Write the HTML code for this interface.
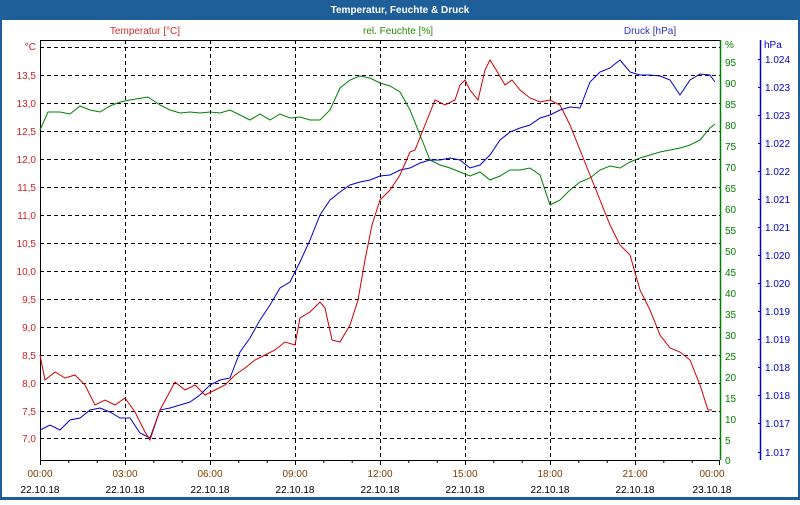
<!DOCTYPE html>
<html><head><meta charset="utf-8"><style>
body{margin:0;width:800px;height:500px;overflow:hidden;background:#fff;font-family:"Liberation Sans",sans-serif}
</style></head><body>
<svg width="800" height="500" xmlns="http://www.w3.org/2000/svg" font-family="Liberation Sans, sans-serif" font-size="10">
<rect x="0" y="0" width="800" height="500" fill="#1e5f99"/>
<rect x="2" y="20" width="796" height="477" fill="#fff"/>
<text x="400" y="13" fill="#fff" font-weight="bold" text-anchor="middle" font-size="10">Temperatur, Feuchte &amp; Druck</text>
<text x="145" y="34" fill="#c83030" text-anchor="middle">Temperatur [°C]</text>
<text x="398" y="34" fill="#2a8a00" text-anchor="middle">rel. Feuchte [%]</text>
<text x="650" y="34" fill="#3030c0" text-anchor="middle">Druck [hPa]</text>
<g stroke="#000" stroke-dasharray="4,3" stroke-width="1">
<path d="M40 47.5H720M40 75.5H720M40 103.5H720M40 131.5H720M40 159.5H720M40 187.5H720M40 215.5H720M40 243.5H720M40 271.5H720M40 299.5H720M40 327.5H720M40 355.5H720M40 383.5H720M40 411.5H720M40 438.5H720"/>
<path d="M125.5 40V460M210.5 40V460M295.5 40V460M380.5 40V460M465.5 40V460M550.5 40V460M635.5 40V460"/>
</g>
<path d="M40.5 40V460.5H720" stroke="#000" fill="none"/>
<path d="M40 40.5H720" stroke="#000"/>
<g stroke="#000"><path d="M40.5 460v5M68.8 460v3M97.2 460v3M125.5 460v5M153.8 460v3M182.2 460v3M210.5 460v5M238.8 460v3M267.2 460v3M295.5 460v5M323.8 460v3M352.2 460v3M380.5 460v5M408.8 460v3M437.2 460v3M465.5 460v5M493.8 460v3M522.2 460v3M550.5 460v5M578.8 460v3M607.2 460v3M635.5 460v5M663.8 460v3M692.2 460v3M719.5 460v5"/></g>
<path d="M720.5 40V460" stroke="#008000" stroke-width="1.5"/>
<path d="M760.5 40V460" stroke="#0000d0" stroke-width="1.5"/>
<g fill="#d02020" text-anchor="end">
<text x="36" y="50">°C</text><text x="36" y="79">13,5</text><text x="36" y="107">13,0</text><text x="36" y="135">12,5</text><text x="36" y="163">12,0</text><text x="36" y="191">11,5</text><text x="36" y="219">11,0</text><text x="36" y="247">10,5</text><text x="36" y="275">10,0</text><text x="36" y="303">9,5</text><text x="36" y="331">9,0</text><text x="36" y="359">8,5</text><text x="36" y="387">8,0</text><text x="36" y="415">7,5</text><text x="36" y="442">7,0</text>
</g>
<g fill="#008000">
<text x="725" y="48">%</text>
<text x="725" y="66">95</text><text x="725" y="87">90</text><text x="725" y="108">85</text><text x="725" y="129">80</text><text x="725" y="150">75</text><text x="725" y="171">70</text><text x="725" y="192">65</text><text x="725" y="213">60</text><text x="725" y="234">55</text><text x="725" y="255">50</text><text x="725" y="276">45</text><text x="725" y="297">40</text><text x="725" y="318">35</text><text x="725" y="339">30</text><text x="725" y="360">25</text><text x="725" y="381">20</text><text x="725" y="402">15</text><text x="725" y="423">10</text><text x="725" y="444">5</text><text x="725" y="464">0</text>
</g>
<g fill="#0000d0">
<text x="764" y="48">hPa</text>
<text x="765" y="63">1.024</text><text x="765" y="91">1.023</text><text x="765" y="119">1.023</text><text x="765" y="147">1.022</text><text x="765" y="175">1.022</text><text x="765" y="203">1.021</text><text x="765" y="231">1.021</text><text x="765" y="259">1.020</text><text x="765" y="287">1.020</text><text x="765" y="315">1.019</text><text x="765" y="343">1.019</text><text x="765" y="371">1.018</text><text x="765" y="399">1.018</text><text x="765" y="427">1.017</text><text x="765" y="456">1.017</text>
</g>
<g stroke="#0000d0"><path d="M758 59.5h3M758 87.5h3M758 115.5h3M758 143.5h3M758 171.5h3M758 199.5h3M758 227.5h3M758 255.5h3M758 283.5h3M758 311.5h3M758 339.5h3M758 367.5h3M758 395.5h3M758 423.5h3M758 452.5h3"/></g>
<g text-anchor="middle">
<g fill="#804000"><text x="40" y="477">00:00</text><text x="125" y="477">03:00</text><text x="210" y="477">06:00</text><text x="295" y="477">09:00</text><text x="380" y="477">12:00</text><text x="465" y="477">15:00</text><text x="550" y="477">18:00</text><text x="635" y="477">21:00</text><text x="712" y="477">00:00</text></g>
<g fill="#000"><text x="40" y="493">22.10.18</text><text x="125" y="493">22.10.18</text><text x="210" y="493">22.10.18</text><text x="295" y="493">22.10.18</text><text x="380" y="493">22.10.18</text><text x="465" y="493">22.10.18</text><text x="550" y="493">22.10.18</text><text x="635" y="493">22.10.18</text><text x="712" y="493">23.10.18</text></g>
</g>
<g fill="none" stroke-width="1">
<polyline stroke="#008000" points="40,130 48,112 60,112 70,114 80,106 90,110 100,112 110,106 120,102 130,100 148,97 160,105 170,110 180,113 190,112 200,113 210,112 220,113 230,110 240,115 250,120 260,114 270,120 280,114 290,118 300,117 310,120 320,120 330,110 340,88 350,80 360,76 370,78 380,83 390,86 400,92 410,110 420,135 430,160 440,165 450,168 460,172 470,176 480,172 490,180 500,176 510,170 520,170 530,168 540,175 550,205 560,200 570,190 580,182 590,178 600,170 610,166 620,168 630,162 640,158 650,155 660,152 670,150 680,148 690,145 700,140 710,128 715,124"/>
<polyline stroke="#0000d0" points="40,430 50,425 60,430 70,420 80,418 90,410 100,408 110,412 120,418 130,418 140,433 150,438 160,410 170,408 180,405 190,402 200,395 210,385 220,380 230,378 240,352 250,338 260,320 270,305 280,288 290,282 300,262 310,240 320,215 330,200 340,192 350,185 360,182 370,180 380,176 390,175 400,170 410,168 420,163 430,160 440,160 450,158 460,160 470,168 480,165 490,155 500,140 510,132 520,128 530,125 540,118 550,115 560,110 570,107 580,108 590,82 600,72 610,68 620,60 630,72 640,75 650,75 660,76 670,80 680,95 690,80 700,74 710,75 715,82"/>
<polyline stroke="#d00000" points="40,355 45,380 55,372 65,378 75,375 85,385 95,405 105,400 115,405 125,398 135,412 145,432 150,440 160,410 175,382 185,390 195,385 205,395 215,390 225,385 235,375 245,368 255,360 265,355 275,350 285,342 295,345 300,318 310,312 320,302 325,308 332,340 340,342 350,325 358,300 365,260 372,225 380,200 390,190 400,175 410,152 415,150 425,125 435,100 445,105 455,100 460,85 465,80 470,90 478,100 485,70 490,60 495,68 505,85 512,80 520,90 530,98 540,102 550,100 560,105 570,125 580,150 590,175 600,200 610,225 620,245 630,255 640,290 650,310 660,335 670,348 680,352 690,360 700,385 708,410 712,410"/>
</g>
</svg>
</body></html>
